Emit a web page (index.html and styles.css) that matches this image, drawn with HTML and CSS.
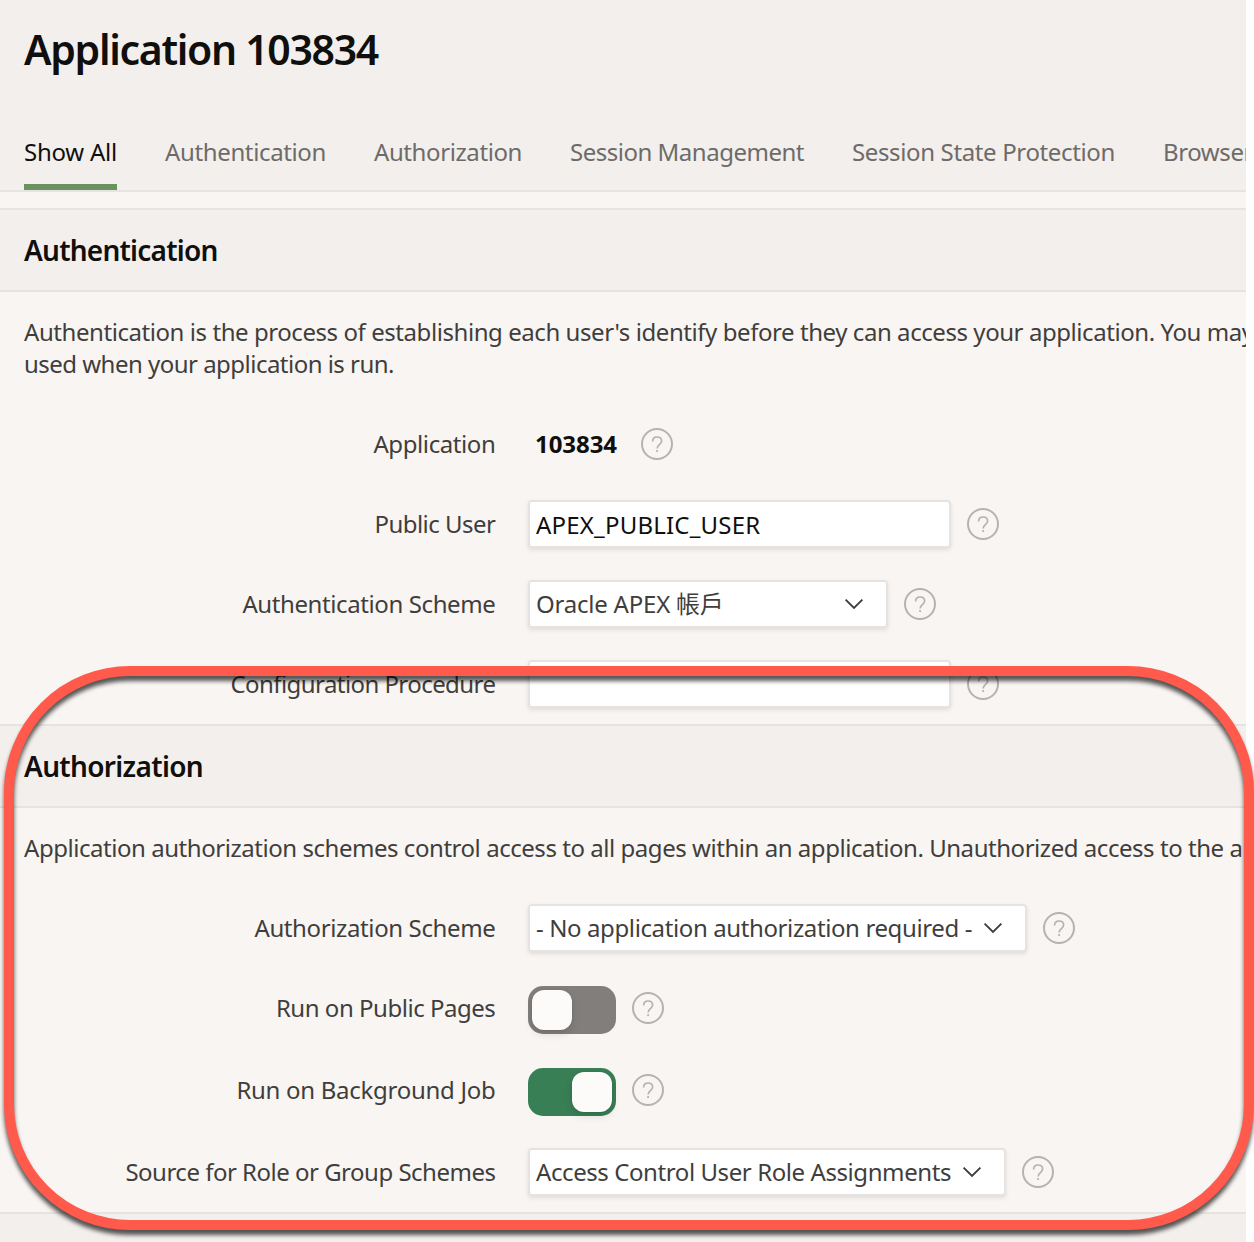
FILE: index.html
```html
<!DOCTYPE html>
<html lang="en">
<head>
<meta charset="utf-8">
<title>Application 103834</title>
<link rel="stylesheet" href="styles.css">
</head>
<body>
<svg class="symbols" aria-hidden="true">
  <symbol id="help" viewBox="0 0 32 32">
    <circle cx="16" cy="16" r="15" fill="none" stroke="currentColor" stroke-width="2"/>
    <path d="M11.6 13.4C11.6 10.6 13.4 9 16.2 9C18.8 9 20.6 10.6 20.6 13C20.6 16.4 16.1 16.8 16.1 20.4" fill="none" stroke="currentColor" stroke-width="1.7"/>
    <circle cx="16.1" cy="23.1" r="1.1" fill="currentColor"/>
  </symbol>
  <symbol id="chevron" viewBox="0 0 20 12">
    <path d="M1.6 1.6L10 10L18.4 1.6" fill="none" stroke="currentColor" stroke-width="1.9"/>
  </symbol>
</svg>
<main class="page">
  <header class="page-header">
    <h1 class="title">Application 103834</h1>
    <nav class="tabs">
      <a class="tab tab-all active">Show All</a>
      <a class="tab tab-authentication">Authentication</a>
      <a class="tab tab-authorization">Authorization</a>
      <a class="tab tab-session">Session Management</a>
      <a class="tab tab-state">Session State Protection</a>
      <a class="tab tab-browser">Browser</a>
    </nav>
  </header>

  <section class="region">
    <h2 class="region-title">Authentication</h2>
    <p class="intro"><span class="intro-main">Authentication is the process of establishing each user's identify before they can access your application. You may</span><br><span class="intro-rest">used when your application is run.</span></p>
    <div class="row">
      <span class="label label-app">Application</span>
      <b class="value">103834</b>
      <svg class="help"><use href="#help"/></svg>
    </div>
    <div class="row">
      <span class="label label-user">Public User</span>
      <div class="field text"><span class="field-user">APEX_PUBLIC_USER</span></div>
      <svg class="help"><use href="#help"/></svg>
    </div>
    <div class="row">
      <span class="label label-authn">Authentication Scheme</span>
      <div class="field select select-authn"><span class="field-authn">Oracle APEX 帳戶</span><svg class="chevron"><use href="#chevron"/></svg></div>
      <svg class="help"><use href="#help"/></svg>
    </div>
    <div class="row">
      <span class="label label-config">Configuration Procedure</span>
      <div class="field text"></div>
      <svg class="help"><use href="#help"/></svg>
    </div>
  </section>

  <section class="region">
    <h2 class="region-title title-authz">Authorization</h2>
    <p class="intro intro-authz">Application authorization schemes control access to all pages within an application. Unauthorized access to the ap</p>
    <div class="row">
      <span class="label label-authz">Authorization Scheme</span>
      <div class="field select select-authz"><span class="field-authz">- No application authorization required -</span><svg class="chevron"><use href="#chevron"/></svg></div>
      <svg class="help"><use href="#help"/></svg>
    </div>
    <div class="row row-switch">
      <span class="label label-public">Run on Public Pages</span>
      <div class="switch"><i class="knob"></i></div>
      <svg class="help"><use href="#help"/></svg>
    </div>
    <div class="row row-switch">
      <span class="label label-job">Run on Background Job</span>
      <div class="switch on"><i class="knob"></i></div>
      <svg class="help"><use href="#help"/></svg>
    </div>
    <div class="row">
      <span class="label label-source">Source for Role or Group Schemes</span>
      <div class="field select select-source"><span class="field-source">Access Control User Role Assignments</span><svg class="chevron"><use href="#chevron"/></svg></div>
      <svg class="help"><use href="#help"/></svg>
    </div>
  </section>
  <div class="next-region"></div>
</main>
<div class="highlight"></div>
</body>
</html>
```
FILE: styles.css
```css
* { box-sizing: border-box; }
body {
  margin: 0;
  height: 1242px;
  overflow: hidden;
  position: relative;
  background: #fff;
  color: #3f3e3c;
  font: 24px/32px "Noto Sans", "Noto Sans CJK TC", sans-serif;
  white-space: nowrap;
}
.symbols { display: none; }
.page {
  display: flex;
  flex-direction: column;
  width: 1246px;
  height: 1242px;
  overflow: hidden;
  background: #f9f5f2;
}
.page-header {
  height: 192px;
  margin-bottom: 16px;
  padding: 21px 24px 0;
  display: flex;
  flex-direction: column;
  justify-content: space-between;
  flex: none;
  background: #f3efec;
  border-bottom: 2px solid #e7e3e0;
}
.title {
  margin: 0;
  color: #100f0e;
  font-size: 41px;
  font-weight: 600;
  line-height: 56px;
  letter-spacing: -1.32px;
}
.tabs { display: flex; gap: 48px; }
.tab {
  flex: none;
  height: 54px;
  border-bottom: 6px solid transparent;
  color: #6d6b69;
}
.tab.active { color: #100f0e; border-color: #6b9362; }
.tab-all { letter-spacing: -0.234px; }
.tab-authentication { letter-spacing: -0.364px; }
.tab-authorization { letter-spacing: -0.404px; }
.tab-session { letter-spacing: -0.489px; }
.tab-state { letter-spacing: -0.36px; }
.tab-browser { letter-spacing: -0.4px; }

.region { flex: none; }
.region-title {
  margin: 0;
  height: 84px;
  padding-left: 24px;
  background: #f3efec;
  border: solid #e7e3e0;
  border-width: 2px 0;
  color: #100f0e;
  font-size: 28px;
  font-weight: 600;
  line-height: 81px;
  letter-spacing: -0.773px;
}
.title-authz { letter-spacing: -0.665px; }
.intro { margin: 24px 0; padding-left: 24px; }
.intro-main { letter-spacing: -0.435px; }
.intro-rest { letter-spacing: -0.519px; }
.intro-authz { letter-spacing: -0.456px; }

.row { display: flex; align-items: center; height: 80px; }
.row-switch { height: 82px; padding-bottom: 2px; }
.label { flex: none; width: 528px; padding-right: 32.6px; text-align: right; }
.label-app { letter-spacing: -0.403px; }
.label-user { letter-spacing: -0.523px; }
.label-authn { letter-spacing: -0.398px; }
.label-config { letter-spacing: -0.565px; }
.label-authz { letter-spacing: -0.377px; }
.label-public { letter-spacing: -0.472px; }
.label-job { letter-spacing: -0.287px; }
.label-source { letter-spacing: -0.502px; }
.value { padding: 0 8px 0 7px; color: #100f0e; font-weight: 700; letter-spacing: -0.06px; }
.field {
  display: flex;
  align-items: center;
  justify-content: space-between;
  height: 48px;
  padding: 0 22px 0 6px;
  background: #fff;
  border: 2px solid #e7e3e0;
  border-radius: 4px;
  box-shadow: 0 2px 4px rgba(0, 0, 0, .1);
}
.text { width: 423px; padding-top: 2px; color: #100f0e; }
.select-authn { width: 360px; }
.select-authz { width: 499px; }
.select-source { width: 478px; }
.field-user { letter-spacing: 0.2px; }
.field-authn { letter-spacing: -0.22px; }
.field-authz { letter-spacing: -0.386px; }
.field-source { letter-spacing: -0.415px; }
.chevron { flex: none; width: 20px; height: 12px; }
.help { flex: none; width: 32px; height: 32px; margin-left: 16px; color: #b5b2b0; }
.switch {
  display: flex;
  width: 88px;
  height: 48px;
  margin-top: 4px;
  padding: 4px;
  border-radius: 15px;
  background: #827e7b;
}
.switch.on { justify-content: flex-end; background: #387f56; }
.knob {
  width: 40px;
  height: 40px;
  border-radius: 12px;
  background: #fcfbfa;
  box-shadow: 0 4px 8px rgba(0, 0, 0, .12), 0 0 2px rgba(0, 0, 0, .12);
}
.next-region { flex: 1; background: #f3efec; border-top: 2px solid #e7e3e0; }

/* Rounded callout drawn over the authorization settings */
.highlight {
  position: absolute;
  left: 4px;
  top: 666px;
  width: 1250px;
  height: 564px;
  border: 10px solid #ff5a4c;
  border-radius: 126px;
  filter: drop-shadow(0 5px 2px rgba(0, 0, 0, .65));
}
```
